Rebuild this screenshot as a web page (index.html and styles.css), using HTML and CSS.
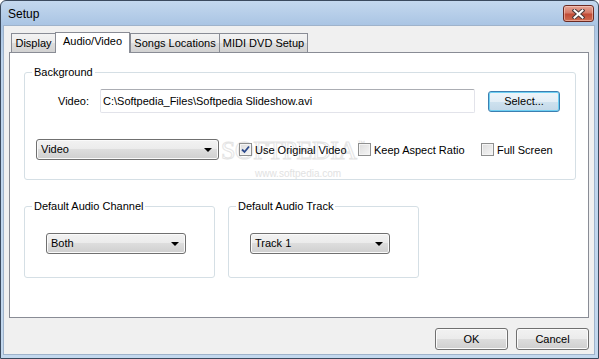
FILE: index.html
```html
<!DOCTYPE html>
<html lang="en">
<head>
  <meta charset="UTF-8" />
  <title>Setup</title>
  <link rel="stylesheet" href="styles.css">
</head>
<body>

  <div class="window">
    <div class="titlebar">
      <span class="title">Setup</span>
      <button class="close-btn" aria-label="Close">
        <svg width="13" height="10" viewBox="0 0 13 10">
          <path d="M2.5 1.5 L10.5 8.5 M10.5 1.5 L2.5 8.5" stroke="#4a3a3a" stroke-width="4" stroke-linecap="square" fill="none"/>
          <path d="M2.5 1.5 L10.5 8.5 M10.5 1.5 L2.5 8.5" stroke="#ffffff" stroke-width="2" stroke-linecap="square" fill="none"/>
        </svg>
      </button>
    </div>

    <div class="client">
      <div class="dialog">
        <div class="tabs">
          <div class="tab tab-display">Display</div>
          <div class="tab tab-av selected">Audio/Video</div>
          <div class="tab tab-songs">Songs Locations</div>
          <div class="tab tab-midi">MIDI DVD Setup</div>
        </div>

        <div class="panel">
          <div class="watermark">
            <span class="wm-big">SOFTPEDIA</span><span class="wm-tm">™</span>
            <span class="wm-small">www.softpedia.com</span>
          </div>

          <fieldset class="group group-bg">
            <legend>Background</legend>
            <div class="video-row">
              <label class="video-label">Video:</label>
              <input class="textbox" type="text" value="C:\Softpedia_Files\Softpedia Slideshow.avi">
              <button class="btn btn-default btn-select">Select...</button>
            </div>
            <div class="options-row">
              <div class="combo combo-video">Video</div>
              <label class="check check-original">
                <span class="box checked">
                  <svg width="9" height="9" viewBox="0 0 9 9">
                    <path d="M1 4.5 L3.5 7 L8 1.5" stroke="#2c4a8c" stroke-width="1.8" fill="none"/>
                  </svg>
                </span>
                Use Original Video
              </label>
              <label class="check check-aspect"><span class="box"></span>Keep Aspect Ratio</label>
              <label class="check"><span class="box"></span>Full Screen</label>
            </div>
          </fieldset>

          <div class="audio-row">
            <fieldset class="group group-audio">
              <legend>Default Audio Channel</legend>
              <div class="combo combo-small">Both</div>
            </fieldset>
            <fieldset class="group group-audio">
              <legend>Default Audio Track</legend>
              <div class="combo combo-small">Track 1</div>
            </fieldset>
          </div>
        </div>

        <div class="footer">
          <button class="btn btn-footer">OK</button>
          <button class="btn btn-footer">Cancel</button>
        </div>
      </div>
    </div>
  </div>

</body>
</html>
```

FILE: styles.css
```css
* { box-sizing: border-box; }

body {
  margin: 0;
  font-family: 'Liberation Sans', Arial, sans-serif;
  font-size: 11px;
  color: #000;
  background: #ffffff;
}

.window {
  width: 599px;
  height: 359px;
  border: 1px solid #3b4a5e;
  border-radius: 6px 6px 0 0;
  background: linear-gradient(#c4d8ee, #aac5e4 24px, #bcd3ec 60px, #c3d8ee);
  display: flex;
  flex-direction: column;
  padding: 0 3px 3px 2px;
}

.titlebar {
  height: 24px;
  display: flex;
  justify-content: space-between;
  align-items: flex-start;
  padding-left: 5px;
}

.title {
  font-size: 12px;
  margin-top: 6px;
  color: #000;
}

.close-btn {
  margin-top: 4px;
  margin-right: 1px;
  width: 31px;
  height: 17px;
  padding: 0;
  border: 1px solid #6b2a22;
  border-radius: 3px;
  background: linear-gradient(#e5a595, #d57a68 45%, #c14b36 55%, #cf6c50);
  box-shadow: inset 0 0 0 1px rgba(255, 220, 210, 0.5);
  display: flex;
  align-items: center;
  justify-content: center;
}

.client {
  flex-grow: 1;
  background: #f0f0f0;
  border: 1px solid #9fb3cb;
  padding: 6px 0 0 5px;
}

.dialog {
  width: 580px;
}

.tabs {
  display: flex;
  align-items: flex-end;
  height: 21px;
  margin-bottom: -1px;
  position: relative;
  z-index: 1;
}

.tab {
  height: 19px;
  margin-bottom: 1px;
  border: 1px solid #898c95;
  border-bottom: none;
  background: linear-gradient(#f3f3f3, #ebebeb 50%, #dddddd 50%, #d2d2d2);
  text-align: center;
  line-height: 18px;
  white-space: nowrap;
}

.tab.selected {
  height: 21px;
  margin-bottom: 0;
  background: #ffffff;
  line-height: 17px;
}

.tab-display { width: 45px; margin-left: 2px; }
.tab-av { width: 75px; margin-left: -1px; }
.tab-songs { width: 90px; margin-left: 0; }
.tab-midi { width: 89px; margin-left: -1px; }

.panel {
  position: relative;
  z-index: 0;
  height: 266px;
  background: #ffffff;
  border: 1px solid #898c95;
  padding-top: 13px;
}

/* faint site watermark printed on the screenshot */
.watermark {
  position: absolute;
  left: 211px;
  top: 83px;
  z-index: -1;
  width: 150px;
}

.wm-big {
  font-family: 'Liberation Serif', serif;
  font-size: 26px;
  letter-spacing: -0.5px;
  color: #ffffff;
  -webkit-text-stroke: 1px #e4e4e4;
}

.wm-tm {
  position: absolute;
  left: 136px;
  top: 3px;
  font-size: 8px;
  color: #e0e0e0;
}

.wm-small {
  display: block;
  margin-left: 34px;
  margin-top: 2px;
  font-size: 10px;
  color: #e2e2e2;
}

.group {
  margin: 0;
  min-inline-size: 0;
  border: 1px solid #d5dfe5;
  border-radius: 3px;
  padding: 0 0 0 7px;
}

.group legend {
  padding: 0 2px;
  line-height: 13px;
  height: 13px;
}

.group-bg {
  margin-left: 14px;
  width: 552px;
  padding-bottom: 19px;
}

.video-row {
  display: flex;
  align-items: center;
  height: 24px;
  margin-top: 10px;
  padding-left: 26px;
}

.video-label {
  width: 42px;
}

.textbox {
  width: 375px;
  height: 24px;
  margin: 0;
  font-family: inherit;
  font-size: 11px;
  padding: 0 0 0 2px;
  border: 1px solid #e2e3ea;
  border-top-color: #abadb3;
  border-radius: 2px;
  color: #000;
  background: #fff;
}

.btn {
  font-family: inherit;
  font-size: 11px;
  color: #000;
  padding: 0;
  border: 1px solid #707070;
  border-radius: 3px;
  background: linear-gradient(#f2f2f2, #ebebeb 50%, #dddddd 50%, #cfcfcf);
  box-shadow: inset 0 0 0 1px #fbfbfb;
}

.btn-default {
  border-color: #3c7fb1;
  box-shadow: inset 0 0 0 1px #6fd0f3;
  background: linear-gradient(#eef5fa, #e3eef6 50%, #cfe2ef 50%, #c3d8e8);
}

.btn-select {
  margin-left: 13px;
  width: 72px;
  height: 21px;
}

.options-row {
  display: flex;
  align-items: center;
  height: 21px;
  margin-top: 26px;
}

.combo {
  position: relative;
  height: 21px;
  line-height: 19px;
  padding-left: 4px;
  border: 1px solid #707070;
  border-radius: 3px;
  background: linear-gradient(#f2f2f2, #ebebeb 50%, #dddddd 50%, #cfcfcf);
  box-shadow: inset 0 0 0 1px #fafafa;
}

.combo::after {
  content: "";
  position: absolute;
  right: 6px;
  top: 8px;
  border-left: 4px solid transparent;
  border-right: 4px solid transparent;
  border-top: 4px solid #000;
}

.combo-video {
  margin-left: 4px;
  width: 183px;
}

.check {
  display: flex;
  align-items: center;
  white-space: nowrap;
}

.check-original {
  margin-left: 20px;
  width: 119px;
}

.check-aspect {
  width: 123px;
}

.box {
  width: 13px;
  height: 13px;
  margin-right: 3px;
  border: 1px solid #8e8f8f;
  background: linear-gradient(135deg, #dcdcdc, #f6f6f6);
  box-shadow: inset 0 0 0 1px #f4f4f4;
  display: flex;
  align-items: center;
  justify-content: center;
}

.audio-row {
  display: flex;
  gap: 13px;
  margin-left: 14px;
  margin-top: 20px;
}

.group-audio {
  width: 191px;
  padding-bottom: 23px;
}

.combo-small {
  margin-top: 20px;
  margin-left: 14px;
  width: 140px;
}

.footer {
  display: flex;
  justify-content: flex-end;
  gap: 8px;
  margin-top: 10px;
}

.btn-footer {
  width: 73px;
  height: 22px;
}
```
